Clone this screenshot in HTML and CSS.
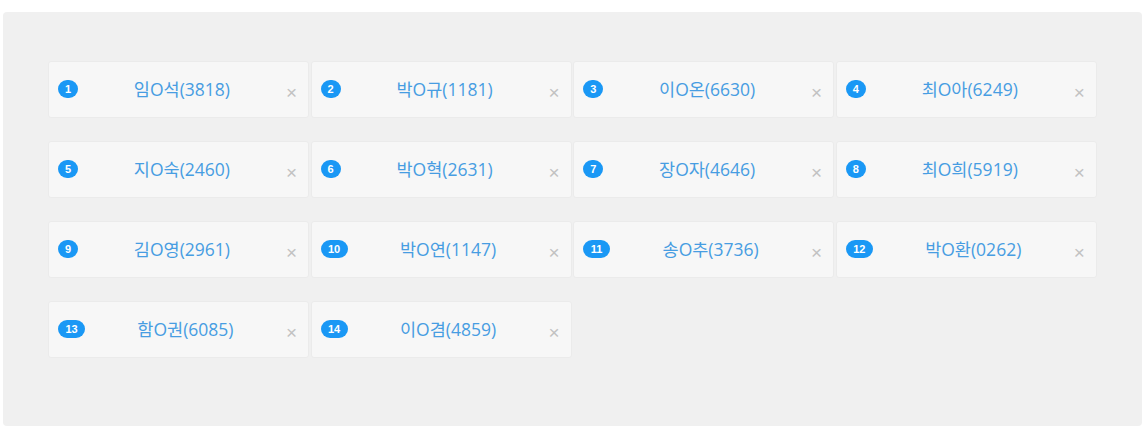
FILE: index.html
```html
<!DOCTYPE html>
<html lang="ko">
<head>
  <meta charset="UTF-8" />
  <title>선택 목록</title>
  <link rel="stylesheet" href="styles.css">
</head>
<body>
  <div class="panel">
    <div class="tags" id="tags"></div>
  </div>

  <script>
    const people = [
      "임O석(3818)", "박O규(1181)", "이O온(6630)", "최O아(6249)",
      "지O숙(2460)", "박O혁(2631)", "장O자(4646)", "최O희(5919)",
      "김O영(2961)", "박O연(1147)", "송O추(3736)", "박O환(0262)",
      "함O권(6085)", "이O겸(4859)"
    ];

    const tags = document.getElementById('tags');

    people.forEach((name, i) => {
      const tag = document.createElement('div');
      tag.className = 'tag';

      const badge = document.createElement('span');
      badge.className = 'badge' + (i >= 9 ? ' wide' : '');
      badge.textContent = i + 1;

      const label = document.createElement('span');
      label.className = 'name';
      label.textContent = name;

      const close = document.createElement('span');
      close.className = 'close';
      close.textContent = '×';
      close.addEventListener('click', () => tag.remove());

      tag.appendChild(badge);
      tag.appendChild(label);
      tag.appendChild(close);
      tags.appendChild(tag);
    });
  </script>
</body>
</html>
```

FILE: styles.css
```css
body {
  margin: 0;
  padding: 12px 5px 10px 3px;
  background: #fff;
  font-family: "Open Sans", "Noto Sans CJK KR", sans-serif;
}
.panel {
  background: #f0f0f0;
  border-radius: 4px;
  height: 414px;
  box-sizing: border-box;
  padding: 49px 45px 0 45px;
}
.tags {
  display: grid;
  grid-template-columns: repeat(4, 261px);
  column-gap: 1.6px;
  row-gap: 23px;
}
.tag {
  height: 57px;
  box-sizing: border-box;
  background: #f7f7f7;
  border: 1px solid #ebebeb;
  border-radius: 3px;
  display: flex;
  align-items: center;
  padding: 0 11px 0 9px;
}
.badge {
  flex-shrink: 0;
  min-width: 20px;
  height: 18px;
  margin-top: -2px;
  border-radius: 9px;
  background: #1a98f5;
  color: #fff;
  font-family: "Liberation Sans", Arial, sans-serif;
  font-size: 11px;
  font-weight: 700;
  line-height: 18px;
  text-align: center;
  box-sizing: border-box;
}
.badge.wide {
  min-width: 27px;
  padding: 0 5px;
}
.name {
  flex-grow: 1;
  text-align: center;
  color: #479de2;
  font-size: 17.5px;
  line-height: 20px;
  margin-top: -1px;
}
.close {
  flex-shrink: 0;
  color: #c2c2c2;
  font-family: "Liberation Sans", Arial, sans-serif;
  font-size: 19px;
  line-height: 18px;
  margin-top: 6px;
  cursor: pointer;
}
```
